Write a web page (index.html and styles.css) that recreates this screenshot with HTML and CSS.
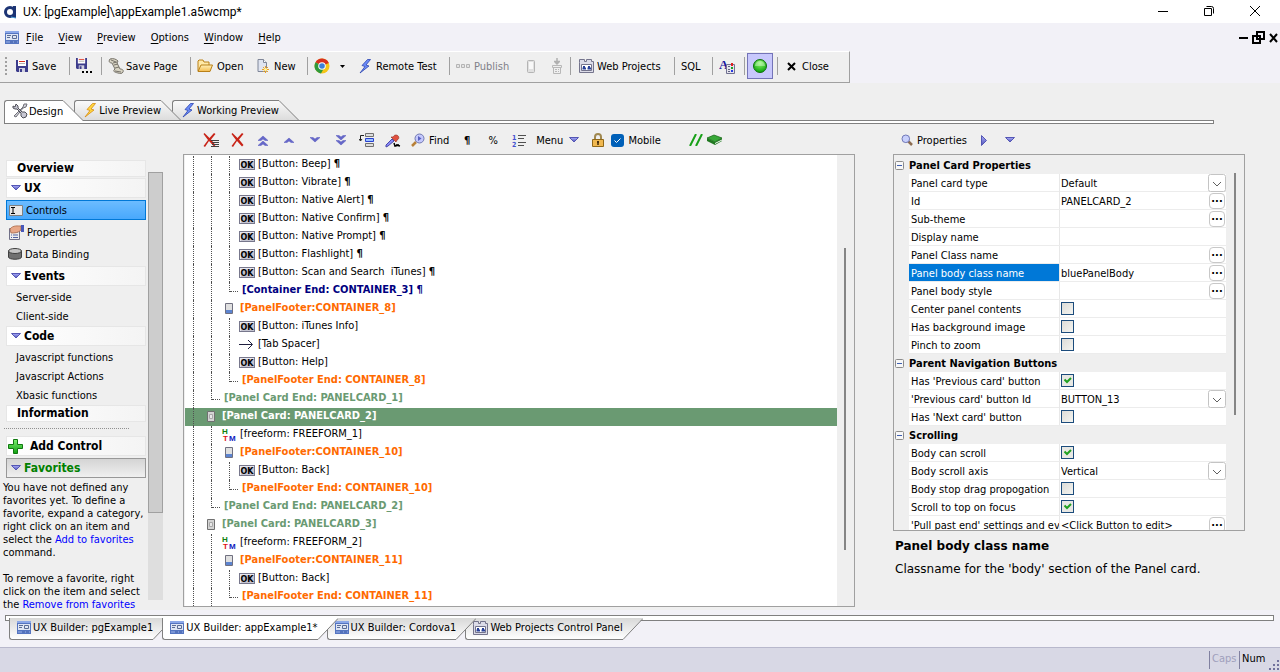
FILE: index.html
```html
<!DOCTYPE html>
<html lang="en">
<head>
    <meta charset="utf-8">
    <title>UX: [pgExample]\appExample1.a5wcmp*</title>
    <link rel="stylesheet" href="styles.css">
</head>
<body>
    <!-- shared icons -->
    <svg class="defs" width="0" height="0">
        <defs>
            <linearGradient id="g-top" x1="0" y1="0" x2="0" y2="1"><stop offset="0" stop-color="#fafafa"/><stop offset="1" stop-color="#dcdcdc"/></linearGradient>
            <linearGradient id="g-bottom" x1="0" y1="0" x2="0" y2="1"><stop offset="0" stop-color="#d8d8d8"/><stop offset="1" stop-color="#ffffff"/></linearGradient>
            <linearGradient id="g-tri" x1="0" y1="0" x2="0" y2="1"><stop offset="0" stop-color="#a8acf8"/><stop offset="1" stop-color="#5254b8"/></linearGradient>
            <radialGradient id="g-ball" cx=".5" cy=".3" r=".7"><stop offset="0" stop-color="#8cf86c"/><stop offset="1" stop-color="#08a008"/></radialGradient>
            <linearGradient id="g-plus" x1="0" y1="0" x2="0" y2="1"><stop offset="0" stop-color="#7cf070"/><stop offset="1" stop-color="#10a010"/></linearGradient>
            <linearGradient id="g-fold" x1="0" y1="0" x2="0" y2="1"><stop offset="0" stop-color="#fff0b8"/><stop offset="1" stop-color="#f4bc50"/></linearGradient>
        </defs>
        <symbol id="form" viewBox="0 0 14 13">
            <rect width="14" height="13" fill="#5474c0"/><rect y="0" width="14" height="2" fill="#8ca8e8"/>
            <path d="M1 3h12v6H1z" fill="#dfe6f4"/><path d="M2 4.500h4M2 6.500h3M7.500 4.500h4v3h-4z" fill="none" stroke="#5b6c94"/><path d="M1 11h12" stroke="#9db4ea"/><path d="M5 11h3M9 11h3" stroke="#3150a0"/>
        </symbol>
        <symbol id="disk" viewBox="0 0 12 12">
            <path d="M0 0h12v12H1L0 11z" fill="#3c3c8c"/><path d="M2 0h8v6H2z" fill="#fff"/><path d="M3 1.500h6" stroke="#d83020"/><path d="M3 3.500h6" stroke="#b0b0b0"/><path d="M3 8h6v4H3z" fill="#d0d0e0"/><path d="M4 9h2v3H4z" fill="#3c3c8c"/>
        </symbol>
        <symbol id="scroll" viewBox="0 0 16 16">
            <path d="M2 1c3-1 6 0 8 2l-1 2 3 6c2 0 4 1 3 3s-3 1.500-5 1-5-1-4-3l1-1-3-6C2 5 0 4 2 1z" fill="#d8d4c4" stroke="#77736a"/><path d="M3 2l5 2M5 5l4-1M6 7l4-1M7 10l4-1M7 13l6 1" stroke="#77736a" fill="none"/>
        </symbol>
        <symbol id="folder" viewBox="0 0 16 14">
            <path d="M1 12V2l1-1h4l1 2h5v3" fill="#ffe9a8" stroke="#b98018"/><path d="M1 12.500L4 6h11.500l-2.500 6.500z" fill="url(#g-fold)" stroke="#b98018"/>
        </symbol>
        <symbol id="new" viewBox="0 0 12 14">
            <path d="M1 .5h5.500l3 3v9H1z" fill="#dfe4f0" stroke="#7f8698"/><path d="M6.500 .5v3h3" fill="#fff" stroke="#7f8698"/><path d="M8.500 7v7M5 10.500h7M6 8l5 5M11 8l-5 5" stroke="#f0a020"/><circle cx="8.500" cy="10.500" r="1.500" fill="#fff8a0"/>
        </symbol>
        <symbol id="chrome" viewBox="0 0 16 16">
            <circle cx="8" cy="8" r="7.500" fill="#f5c518"/><path d="M8 8L1.500 4.200A7.500 7.500 0 0 1 14.800 5z" fill="#d8301f"/><path d="M8 8L1.500 4.200A7.500 7.500 0 0 0 7 15.400L9.500 11z" fill="#2f9a3c"/><circle cx="8" cy="8" r="3.800" fill="#fff"/><circle cx="8" cy="8" r="2.800" fill="#3d7fd8"/>
        </symbol>
        <symbol id="bolt" viewBox="0 0 12 15">
            <path d="M8.500 .5L3 6.500l3 1-5 6.500 9-7-3-1 4.500-5.500z" fill="#6c8cf8" stroke="#2c44b0" stroke-width=".8"/>
        </symbol>
        <symbol id="bolt-y" viewBox="0 0 12 15">
            <path d="M8.500 .5L3 6.500l3 1-5 6.500 9-7-3-1 4.500-5.500z" fill="#ffd840" stroke="#d88a10" stroke-width=".8"/>
        </symbol>
        <symbol id="boxes" viewBox="0 0 14 5"><path d="M.5.500h3v3h-3zM5.500.500h3v3h-3zM10.500.500h3v3h-3z" fill="#e4e4e4" stroke="#b4b4b4"/></symbol>
        <symbol id="phone" viewBox="0 0 8 13"><rect x=".5" y=".5" width="7" height="12" rx="1" fill="#e0e0e0" stroke="#b4b4b4"/><path d="M2 2h4v7H2z" fill="#f8f8f8"/></symbol>
        <symbol id="install" viewBox="0 0 10 16"><path d="M5 0v5M2 3.500h6M3 4l2 2 2-2" fill="none" stroke="#b0b0b0" stroke-width="1.500"/><path d="M.5 7.500h9v2h-9zM1.500 9.500v6h7v-6M3 11.500h2M6 11.500h1M3 13.500h2M6 13.500h1" fill="none" stroke="#b8b8b8"/></symbol>
        <symbol id="projects" viewBox="0 0 15 14">
            <path d="M.5 3.500v-3h5v2h2v-2h5v2h2v11H.5z" fill="#dcdce8" stroke="#74748c"/><path d="M2.500 5.500h10v6h-10z" fill="#fff" stroke="#74748c"/><path d="M4 7h2v1l1 1v1.500H3.500V9L4 8zM9 7h2v1l1 1v1.500H8.500V9L9 8z" fill="#284098"/>
        </symbol>
        <symbol id="x-red" viewBox="0 0 13 14"><path d="M1.500 0l5 5L11 0l1.500 1-4.500 5.500L12.500 12l-1.500 1.500-5-5.500L2 14l-1.500-1 4.500-6L.5 1z" fill="#c82418"/></symbol>
        <symbol id="up" viewBox="0 0 10 6"><path d="M0 5.500L5 1l5 4.500H7L5 4 3 5.500z" fill="#6668c8" stroke="#5658c0" stroke-width=".5"/></symbol>
        <symbol id="down" viewBox="0 0 10 6"><path d="M0 .5L5 5l5-4.500H7L5 2 3 .5z" fill="#6668c8" stroke="#5658c0" stroke-width=".5"/></symbol>
        <symbol id="tri" viewBox="0 0 10 6"><path d="M.5.500h9L5 5z" fill="url(#g-tri)" stroke="#5456b4"/></symbol>
        <symbol id="tri-r" viewBox="0 0 6 11"><path d="M.5.500v10l5-5z" fill="url(#g-tri)" stroke="#5456b4"/></symbol>
        <symbol id="loupe" viewBox="0 0 12 12"><path d="M7 7l4 4" stroke="#8c6c50" stroke-width="2.500"/><circle cx="4.800" cy="4.800" r="3.800" fill="#c8d0fc" stroke="#7078b8"/></symbol>
        <symbol id="card" viewBox="0 0 8 11"><path d="M.5.500h7v10h-7z" fill="#d4d4d4" stroke="#707070"/><path d="M2.500 3.500h3v4h-3z" fill="#e8e8e8" stroke="#a8a8a8"/></symbol>
        <symbol id="footer" viewBox="0 0 8 11"><path d="M.5.500h7v10h-7z" fill="#e0e0e0" stroke="#707080"/><path d="M1 7h6v3H1z" fill="#5c84d0"/></symbol>
        <symbol id="arrow" viewBox="0 0 15 11"><path d="M0 5.500h13M9 1l4.500 4.500L9 10" fill="none" stroke="#202040"/></symbol>
        <symbol id="minus" viewBox="0 0 9 9"><rect x=".5" y=".5" width="8" height="8" rx="1" fill="#f8f8f8" stroke="#8c8c8c"/><path d="M2 4.500h5" stroke="#4060b0"/></symbol>
    </svg>
    <!-- icons with lettering -->
    <svg class="lettered">
        <symbol id="style" viewBox="0 0 16 16">
            <text x="0" y="11" font-size="13" font-weight="bold" font-family="Liberation Serif, serif" fill="#1818a0">A</text><path d="M7.500 6.500h8v9h-8z" fill="#e4e4ec" stroke="#707090"/><path d="M12 5h2v3h-2z" fill="#e02020"/><path d="M12 9h2v2h-2z" fill="#18a028"/><path d="M12 12h2v2h-2z" fill="#2838e0"/><path d="M9 8h2v1H9zM9 11h2v1H9zM9 13h2v1H9z" fill="#606080"/>
        </symbol>
        <symbol id="ok" viewBox="0 0 16 11">
            <rect x=".5" y=".5" width="15" height="10" fill="#c4c4d0" stroke="#77778c"/><path d="M1 1.500h14M1.500 1v9" stroke="#e8e8f0"/>
            <text x="8" y="8.500" text-anchor="middle" font-size="8" font-weight="bold" font-family="DejaVu Sans, sans-serif">OK</text>
        </symbol>
        <symbol id="htm" viewBox="0 0 14 13">
            <g font-size="8" font-weight="bold" font-family="Liberation Sans, sans-serif"><text x="0" y="6" fill="#108010">H</text><text x="1" y="13" fill="#e01010">T</text><text x="7" y="13" fill="#1020c0">M</text></g>
        </symbol>
    </svg>

    <header class="titlebar">
        <svg width="14" height="14" viewBox="0 0 14 14"><circle cx="6" cy="7" r="4.500" fill="none" stroke="#1c3474" stroke-width="3"/><path d="M9 1h3v12H9z" fill="#1c3474"/><path d="M7 12l5 1" stroke="#4ba0d8"/></svg>
        <h1>UX: [pgExample]\appExample1.a5wcmp*</h1>
        <div class="window-buttons">
            <button aria-label="Minimize"><svg width="12" height="12" viewBox="0 0 12 12"><path d="M1 6.500h10" stroke="#000"/></svg></button>
            <button aria-label="Restore"><svg width="12" height="12" viewBox="0 0 12 12"><path d="M1.500 3.500h7v7h-7zM3.500 1.500h5a2 2 0 0 1 2 2V8.500" fill="none" stroke="#000"/></svg></button>
            <button aria-label="Close"><svg width="12" height="12" viewBox="0 0 12 12"><path d="M1 1l10 10M11 1L1 11" stroke="#000"/></svg></button>
        </div>
    </header>

    <nav class="menubar">
        <svg width="14" height="13"><use href="#form"/></svg>
        <button><u>F</u>ile</button>
        <button><u>V</u>iew</button>
        <button><u>P</u>review</button>
        <button><u>O</u>ptions</button>
        <button><u>W</u>indow</button>
        <button><u>H</u>elp</button>
        <div class="mdi-buttons">
            <button aria-label="Minimize document"><svg width="9" height="12" viewBox="0 0 9 12"><path d="M0 6h9" stroke="#000" stroke-width="2"/></svg></button>
            <button aria-label="Restore document"><svg width="13" height="13" viewBox="0 0 13 13"><path d="M5 1h7v7H5zM1 5h7v7H1z" fill="none" stroke="#000" stroke-width="2"/></svg></button>
            <button aria-label="Close document"><svg width="9" height="10" viewBox="0 0 9 10"><path d="M1 1l7 8M8 1L1 9" stroke="#000" stroke-width="2"/></svg></button>
        </div>
    </nav>

    <div class="toolbar-row">
        <div class="toolbar">
            <span class="grip"></span>
            <button class="w60"><svg width="12" height="12"><use href="#disk"/></svg>Save</button>
            <button class="w32" aria-label="Save as"><svg width="18" height="16"><use href="#disk" width="11" height="11"/><path d="M6 13h2v2H6zM10 13h2v2h-2zM14 13h2v2h-2z"/></svg></button>
            <button class="w89"><svg width="16" height="16"><use href="#scroll"/></svg>Save Page</button>
            <button class="w60 plain"><svg width="16" height="14"><use href="#folder"/></svg>Open</button>
            <button class="w57"><svg width="12" height="14"><use href="#new"/></svg>New</button>
            <button class="w45 plain" aria-label="Browser"><svg width="16" height="16"><use href="#chrome"/></svg><svg class="caret" width="5" height="3"><path d="M0 0h5L2.500 3z"/></svg></button>
            <button class="w97"><svg width="12" height="15"><use href="#bolt"/></svg>Remote Test</button>
            <button class="w68" disabled><svg width="14" height="5"><use href="#boxes"/></svg>Publish</button>
            <button class="w26" disabled aria-label="Device"><svg width="8" height="13"><use href="#phone"/></svg></button>
            <button class="w26" disabled aria-label="Install"><svg width="10" height="16"><use href="#install"/></svg></button>
            <button class="w105"><svg width="15" height="14"><use href="#projects"/></svg>Web Projects</button>
            <button class="w38">SQL</button>
            <button class="w32" aria-label="Styles"><svg width="16" height="16"><use href="#style"/></svg></button>
            <button class="pressed" aria-label="Status"><svg width="14" height="14"><circle cx="7" cy="7" r="6.500" fill="url(#g-ball)" stroke="#107010"/><path d="M2 7a5 5 0 0 1 10 0z" fill="#fff" opacity=".35"/></svg></button>
            <button class="close"><svg width="9" height="9"><path d="M1 1l7 7M8 1L1 8" stroke="#000" stroke-width="2"/></svg>Close</button>
        </div>
    </div>

    <main>
        <div class="tabs top">
            <button class="tab active"><span><svg width="16" height="16" viewBox="0 0 16 16"><path d="M2 13l9-9 1-3 3 0-1 3-3 1-7 9z" fill="#d0d0d8" stroke="#707078"/><path d="M1 3l2 1 1-3 2 2v2l4 4h3l2 2-1 3-3 1-2-2V10L5 6H3L1 5z" fill="#c8c8d4" stroke="#505058"/></svg>Design</span><svg class="slant" width="20" height="21"><path d="M0 0L20 21H0z" fill="#fff"/><path d="M0 .5L20 20.500" stroke="#808080"/></svg></button>
            <button class="tab"><span><svg width="16" height="15"><use href="#bolt-y"/></svg>Live Preview</span><svg class="slant" width="20" height="21"><path d="M0 0L20 20H0z" fill="url(#g-top)"/><path d="M0 .5L20 20.500" stroke="#808080"/></svg></button>
            <button class="tab"><span><svg width="16" height="15"><use href="#bolt"/></svg>Working Preview</span><svg class="slant" width="20" height="21"><path d="M0 0L20 20H0z" fill="url(#g-top)"/><path d="M0 .5L20 20.500" stroke="#808080"/></svg></button>
        </div>

        <div class="workspace">
            <aside>
                <nav class="side">
                    <a href="#" class="head short">Overview</a>
                    <a href="#" class="head"><svg width="10" height="6"><use href="#tri"/></svg>UX</a>
                    <a href="#" class="sub selected"><svg width="14" height="11"><path d="M.5.500h13v10H.5z" fill="#e8e8e8" stroke="#808080"/><path d="M2 2.500h4M4 2.500v6M2 8.500h4" stroke="#000" fill="none"/></svg>Controls</a>
                    <a href="#" class="sub"><svg width="16" height="15"><path d="M1.500 3.500h10v11h-10z" fill="#eee" stroke="#707088"/><path d="M3 7h1M5 7h5M3 10h1M5 10h5M3 12.500h1M5 12.500h5" stroke="#5060a0"/><path d="M2 4c3-4 8-3 11-3v4c-3 3-6 3-10 3z" fill="#e8a888" stroke="#a86848" stroke-width=".8"/><path d="M13 0h3v7h-3z" fill="#4858b8"/></svg>Properties</a>
                    <a href="#" class="sub"><svg width="14" height="12"><path d="M.5 3v6c0 3 13 3 13 0V3z" fill="#707070" stroke="#404040"/><ellipse cx="7" cy="3" rx="6.500" ry="2.500" fill="#c4c4c4" stroke="#404040"/></svg>Data Binding</a>
                    <a href="#" class="head"><svg width="10" height="6"><use href="#tri"/></svg>Events</a>
                    <ul>
                        <li><a href="#">Server-side</a></li>
                        <li><a href="#">Client-side</a></li>
                    </ul>
                    <a href="#" class="head"><svg width="10" height="6"><use href="#tri"/></svg>Code</a>
                    <ul>
                        <li><a href="#">Javascript functions</a></li>
                        <li><a href="#">Javascript Actions</a></li>
                        <li><a href="#">Xbasic functions</a></li>
                    </ul>
                    <a href="#" class="head short">Information</a>
                    <hr>
                    <a href="#" class="head add"><svg width="15" height="15"><path d="M5.500.500h4v5h5v4h-5v5h-4v-5h-5v-4h5z" fill="url(#g-plus)" stroke="#107810"/></svg>Add Control</a>
                    <a href="#" class="head favorites"><svg width="10" height="6"><use href="#tri"/></svg>Favorites</a>
                    <div class="help">
                        <p>You have not defined any favorites yet. To define a favorite, expand a category, right click on an item and select the <a href="#">Add to favorites</a> command.</p>
                        <p>To remove a favorite, right click on the item and select the <a href="#">Remove from favorites</a></p>
                    </div>
                </nav>
                <div class="side-scroll"><div class="thumb"></div></div>
            </aside>

            <section class="tree-pane">
                <div class="pane-tools">
                    <button aria-label="Delete with children"><svg width="16" height="14"><use href="#x-red" width="13" height="14"/><path d="M8 7.500h8M9 9.500h7M9 11.500h7M8 13.500h8" stroke="#404040"/></svg></button>
                    <button aria-label="Delete"><svg width="13" height="14"><use href="#x-red"/></svg></button>
                    <button aria-label="Move to top"><svg width="10" height="11"><use href="#up" width="10" height="6"/><use href="#up" y="5" width="10" height="6"/></svg></button>
                    <button aria-label="Move up"><svg width="10" height="6"><use href="#up"/></svg></button>
                    <button aria-label="Move down"><svg width="10" height="6"><use href="#down"/></svg></button>
                    <button aria-label="Move to bottom"><svg width="10" height="11"><use href="#down" width="10" height="6"/><use href="#down" y="5" width="10" height="6"/></svg></button>
                    <button aria-label="Wrap"><svg width="16" height="14"><path d="M5 2.500H1.500v5M0 6l1.500 2L3 6" fill="none" stroke="#202020"/><path d="M6.500.500h8v3h-8zM6.500 10.500h8v3h-8z" fill="#ddd" stroke="#707070"/><path d="M6.500 5.500h8v3h-8z" fill="#9cc4ff" stroke="#2840d0"/></svg></button>
                    <button aria-label="Pick style"><svg width="16" height="15"><path d="M1 12l6-6 2 2-6 5-2 1z" fill="#8888f8" stroke="#4848a8"/><path d="M6 4l5 5 1-2c3-1 2-5-1-5-2 0-2 1-3 2z" fill="#e05040" stroke="#902818" stroke-width=".6"/><path d="M9 10l1 3 4-1M11 12l4 1" fill="none" stroke="#000" stroke-width="1.500"/></svg></button>
                    <button class="text find"><svg width="14" height="14"><path d="M1 13l4-4" stroke="#b88038" stroke-width="2.500"/><circle cx="8.500" cy="5.500" r="4.500" fill="#c4c8fc" stroke="#7078b0"/><path d="M7 3v5l3.500-2.500z" fill="#5860c0"/></svg>Find</button>
                    <button aria-label="Line break"><b>¶</b></button>
                    <button aria-label="Width">%</button>
                    <button aria-label="Tab order"><svg width="14" height="13"><g font-size="7" font-weight="bold" font-family="DejaVu Sans Condensed, sans-serif" fill="#4450d0"><text x="0" y="6">1</text><text x="0" y="13">2</text></g><path d="M6 1.500h8M6 4.500h6M6 8.500h8M6 11.500h6" stroke="#505050"/></svg></button>
                    <button class="text menu">Menu<svg width="10" height="6"><use href="#tri"/></svg></button>
                    <button aria-label="Lock"><svg width="12" height="14"><path d="M3 7V4a3 3 0 0 1 6 0v3" fill="none" stroke="#a08850" stroke-width="2"/><path d="M.5 6.500h11v7H.5z" fill="#f0b850" stroke="#906818"/><path d="M6 8v4M5 9h2" stroke="#402808" stroke-width="1.500"/></svg></button>
                    <label class="mobile"><input type="checkbox" checked>Mobile</label>
                    <button class="comment" aria-label="Comments"><svg width="34" height="12"><path d="M1 12L7 0M7 12l6-12" stroke="#18a018" stroke-width="2"/><path d="M18 4l7-3 8 3-7 4z" fill="#38a838" stroke="#106010" stroke-width=".7"/><path d="M18 4v3l8 4V8zM26 8l7-4v3l-7 4z" fill="#207820"/><path d="M26 9.500l7-3.500" stroke="#fff"/></svg></button>
                </div>
                <div class="tree-box">
                    <ul class="tree">
                        <li><i></i><i></i><i class="last"></i><svg><use href="#ok" width="16" height="11"/></svg>[Button: Beep] <b>¶</b></li>
                        <li><i></i><i></i><i class="last"></i><svg><use href="#ok" width="16" height="11"/></svg>[Button: Vibrate] <b>¶</b></li>
                        <li><i></i><i></i><i class="last"></i><svg><use href="#ok" width="16" height="11"/></svg>[Button: Native Alert] <b>¶</b></li>
                        <li><i></i><i></i><i class="last"></i><svg><use href="#ok" width="16" height="11"/></svg>[Button: Native Confirm] <b>¶</b></li>
                        <li><i></i><i></i><i class="last"></i><svg><use href="#ok" width="16" height="11"/></svg>[Button: Native Prompt] <b>¶</b></li>
                        <li><i></i><i></i><i class="last"></i><svg><use href="#ok" width="16" height="11"/></svg>[Button: Flashlight] <b>¶</b></li>
                        <li><i></i><i></i><i class="last"></i><svg><use href="#ok" width="16" height="11"/></svg>[Button: Scan and Search&nbsp; iTunes] <b>¶</b></li>
                        <li class="container"><i></i><i></i><i class="end"></i>[Container End: CONTAINER_3] ¶</li>
                        <li class="foot"><i></i><i class="last"></i><svg><use href="#footer" x="4" width="8" height="11"/></svg>[PanelFooter:CONTAINER_8]</li>
                        <li><i></i><i></i><i class="last"></i><svg><use href="#ok" width="16" height="11"/></svg>[Button: iTunes Info]</li>
                        <li><i></i><i></i><i class="last"></i><svg><use href="#arrow" width="15" height="11"/></svg>[Tab Spacer]</li>
                        <li><i></i><i></i><i class="last"></i><svg><use href="#ok" width="16" height="11"/></svg>[Button: Help]</li>
                        <li class="foot"><i></i><i></i><i class="end"></i>[PanelFooter End: CONTAINER_8]</li>
                        <li class="panel"><i></i><i class="end"></i>[Panel Card End: PANELCARD_1]</li>
                        <li class="panel selected"><i class="last"></i><svg><use href="#card" x="4" width="8" height="11"/></svg>[Panel Card: PANELCARD_2]</li>
                        <li><i></i><i class="last"></i><svg class="html"><use href="#htm" x="1" width="14" height="13"/></svg>[freeform: FREEFORM_1]</li>
                        <li class="foot"><i></i><i class="last"></i><svg><use href="#footer" x="4" width="8" height="11"/></svg>[PanelFooter:CONTAINER_10]</li>
                        <li><i></i><i></i><i class="last"></i><svg><use href="#ok" width="16" height="11"/></svg>[Button: Back]</li>
                        <li class="foot"><i></i><i></i><i class="end"></i>[PanelFooter End: CONTAINER_10]</li>
                        <li class="panel"><i></i><i class="end"></i>[Panel Card End: PANELCARD_2]</li>
                        <li class="panel"><i class="last"></i><svg><use href="#card" x="4" width="8" height="11"/></svg>[Panel Card: PANELCARD_3]</li>
                        <li><i></i><i class="last"></i><svg class="html"><use href="#htm" x="1" width="14" height="13"/></svg>[freeform: FREEFORM_2]</li>
                        <li class="foot"><i></i><i class="last"></i><svg><use href="#footer" x="4" width="8" height="11"/></svg>[PanelFooter:CONTAINER_11]</li>
                        <li><i></i><i></i><i class="last"></i><svg><use href="#ok" width="16" height="11"/></svg>[Button: Back]</li>
                        <li class="foot"><i></i><i></i><i class="end"></i>[PanelFooter End: CONTAINER_11]</li>
                    </ul>
                    <div class="thin-scroll tree-scroll"><div></div></div>
                </div>
            </section>

            <section class="prop-pane">
                <div class="pane-tools">
                    <button class="text props"><svg width="12" height="12"><use href="#loupe"/></svg>Properties</button>
                    <button aria-label="Next"><svg width="6" height="11"><use href="#tri-r"/></svg></button>
                    <button aria-label="More"><svg width="10" height="6"><use href="#tri"/></svg></button>
                </div>
                <div class="prop-box">
                    <div class="props-list">
                        <h2><svg width="9" height="9"><use href="#minus"/></svg>Panel Card Properties</h2>
                        <div class="prop"><label for="p1">Panel card type</label><select id="p1"><option>Default</option></select></div>
                        <div class="prop"><label for="p2">Id</label><input type="text" id="p2" value="PANELCARD_2"><button aria-label="Edit Id">...</button></div>
                        <div class="prop"><label for="p3">Sub-theme</label><input type="text" id="p3"><button aria-label="Edit Sub-theme">...</button></div>
                        <div class="prop"><label for="p4">Display name</label><input type="text" id="p4"></div>
                        <div class="prop"><label for="p5">Panel Class name</label><input type="text" id="p5"><button aria-label="Edit Panel Class name">...</button></div>
                        <div class="prop selected"><label for="p6">Panel body class name</label><input type="text" id="p6" value="bluePanelBody"><button aria-label="Edit Panel body class name">...</button></div>
                        <div class="prop"><label for="p7">Panel body style</label><input type="text" id="p7"><button aria-label="Edit Panel body style">...</button></div>
                        <div class="prop"><label for="p8">Center panel contents</label><input type="checkbox" id="p8"></div>
                        <div class="prop"><label for="p9">Has background image</label><input type="checkbox" id="p9"></div>
                        <div class="prop"><label for="p10">Pinch to zoom</label><input type="checkbox" id="p10"></div>
                        <h2><svg width="9" height="9"><use href="#minus"/></svg>Parent Navigation Buttons</h2>
                        <div class="prop"><label for="p11">Has 'Previous card' button</label><input type="checkbox" id="p11" checked></div>
                        <div class="prop"><label for="p12">'Previous card' button Id</label><select id="p12"><option>BUTTON_13</option></select></div>
                        <div class="prop"><label for="p13">Has 'Next card' button</label><input type="checkbox" id="p13"></div>
                        <h2><svg width="9" height="9"><use href="#minus"/></svg>Scrolling</h2>
                        <div class="prop"><label for="p14">Body can scroll</label><input type="checkbox" id="p14" checked></div>
                        <div class="prop"><label for="p15">Body scroll axis</label><select id="p15"><option>Vertical</option></select></div>
                        <div class="prop"><label for="p16">Body stop drag propogation</label><input type="checkbox" id="p16"></div>
                        <div class="prop"><label for="p17">Scroll to top on focus</label><input type="checkbox" id="p17" checked></div>
                        <div class="prop"><label for="p18">'Pull past end' settings and eve</label><input type="text" id="p18" value="&lt;Click Button to edit&gt;"><button aria-label="Edit Pull past end">...</button></div>
                    </div>
                    <div class="thin-scroll prop-scroll"><div></div></div>
                </div>
                <div class="description">
                    <h3>Panel body class name</h3>
                    <p>Classname for the 'body' section of the Panel card.</p>
                </div>
            </section>
        </div>
    </main>

    <div class="tabs bottom">
        <button class="tab"><span><svg width="14" height="13"><use href="#form"/></svg>UX Builder: pgExample1</span><svg class="slant" width="20" height="22"><path d="M0 22L20 0H0z" fill="url(#g-bottom)"/><path d="M0 21.500L20 .5" stroke="#808080"/></svg></button>
        <button class="tab active"><span><svg width="14" height="13"><use href="#form"/></svg>UX Builder: appExample1*</span><svg class="slant" width="20" height="22"><path d="M0 22L20 0H0z" fill="#fff"/><path d="M0 21.500L20 .5" stroke="#808080"/></svg></button>
        <button class="tab"><span><svg width="14" height="13"><use href="#form"/></svg>UX Builder: Cordova1</span><svg class="slant" width="20" height="22"><path d="M0 22L20 0H0z" fill="url(#g-bottom)"/><path d="M0 21.500L20 .5" stroke="#808080"/></svg></button>
        <button class="tab"><span><svg width="15" height="14"><use href="#projects"/></svg>Web Projects Control Panel</span><svg class="slant" width="20" height="22"><path d="M0 22L20 0H0z" fill="url(#g-bottom)"/><path d="M0 21.500L20 .5" stroke="#808080"/></svg></button>
    </div>

    <footer class="statusbar">
        <span class="off">Caps</span>
        <span>Num</span>
        <svg width="11" height="11"><path d="M8 0h2v2H8zM4 4h2v2H4zM8 4h2v2H8zM0 8h2v2H0zM4 8h2v2H4zM8 8h2v2H8z" fill="#70709c"/></svg>
    </footer>
</body>
</html>
```
FILE: styles.css
```css
* { box-sizing: border-box; }
body { margin: 0; height: 100vh; display: flex; flex-direction: column; overflow: hidden; background: #efefef; color: #000; font: 11px/13px "DejaVu Sans Condensed", "Noto Sans", sans-serif; }
button, input, select { font: inherit; color: inherit; margin: 0; padding: 0; border: none; background: none; }
button { display: flex; align-items: center; white-space: nowrap; }
a { color: inherit; text-decoration: none; }
ul { list-style: none; margin: 0; padding: 0; }
h1, h2, h3, p { margin: 0; }
svg { display: block; flex: none; }
.defs { position: absolute; }
.lettered { display: none; }

/* title and menu */
.titlebar { height: 23px; flex: none; display: flex; align-items: center; padding-left: 4px; background: #fff; }
.titlebar h1 { font: 12px/16px Roboto, "Noto Sans", sans-serif; margin-left: 5px; }
.window-buttons { display: flex; margin-left: auto; padding: 0 2px 2px 0; height: 23px; }
.window-buttons button { width: 46px; justify-content: center; }
.menubar { height: 28px; flex: none; display: flex; align-items: center; gap: 15px; padding: 1px 2px 0 5px; background: #f2f1f7; }
.menubar > svg { margin-right: -8px; }
.menubar u { text-underline-offset: 2px; }
.mdi-buttons { display: flex; gap: 4px; margin-left: auto; }

/* main toolbar */
.toolbar-row { flex: none; background: #f2f1f7; display: flex; }
.toolbar { display: flex; align-items: center; width: 850px; height: 32px; padding: 0 0 2px 5px; background: #efefef; border-top: 1px solid #fff; border-bottom: 1px solid #a0a0a0; border-right: 1px solid #a0a0a0; }
.grip { width: 5px; height: 18px; border-left: 2px dotted #a0a0a0; }
.toolbar button { height: 18px; gap: 5px; padding: 0 6px; border-right: 1px solid #a0a0a0; }
.toolbar button:disabled { color: #808088; border-right-color: transparent; }
.toolbar .plain { border-right-color: transparent; }
.toolbar .w26 { width: 26px; justify-content: center; }
.toolbar .w32 { width: 32px; }
.toolbar .w38 { width: 38px; }
.toolbar .w45 { width: 45px; gap: 10px; }
.toolbar .w57 { width: 57px; }
.toolbar .w60 { width: 60px; gap: 4px; }
.toolbar .w68 { width: 68px; gap: 4px; }
.toolbar .w89 { width: 89px; gap: 2px; }
.toolbar .w97 { width: 97px; }
.toolbar .w105 { width: 105px; gap: 3px; padding-left: 8px; border-left: 1px solid #a0a0a0; }
.toolbar .pressed { width: 26px; height: 26px; margin: 0 4px 0 2px; justify-content: center; background: #c8c8fc; border: 1px solid #7474b8; }
.toolbar .close { padding-left: 9px; gap: 6px; border-right: none; border-left: 1px solid #a0a0a0; }

/* slanted tabs */
.tabs { display: flex; flex: none; position: relative; }
.tab { position: relative; margin-right: -9px; z-index: 2; }
.tab:nth-child(3) { z-index: 1; }
.tab:nth-child(4) { z-index: 0; }
.tab.active { z-index: 4; }
.tab span { display: flex; align-items: center; border-left: 1px solid #808080; }
.top { margin: 17px 66px 0 4px; border-bottom: 1px solid #808080; padding-bottom: 2px; }
.top::before { content: ""; position: absolute; left: 0; right: 0; bottom: 0; height: 2px; background: #fff; border-top: 1px solid #808080; border-left: 1px solid #808080; border-right: 1px solid #808080; }
.top .tab { height: 20px; }
.top .tab span { height: 20px; padding-left: 7px; gap: 1px; border-top: 1px solid #808080; border-top-left-radius: 3px; background: linear-gradient(#fafafa, #dcdcdc); }
.top .tab .slant { height: 20px; }
.top .tab.active, .top .tab.active span, .top .tab.active .slant { height: 21px; }
.top .tab.active span { background: #fff; }

main { flex: 1; min-height: 0; display: flex; flex-direction: column; padding-bottom: 3px; }
.workspace { flex: 1; min-height: 0; display: grid; grid-template-columns: 183px minmax(0, 672fr) minmax(0, 390fr); padding: 2px 35px 0 0; }

/* left navigation */
aside { display: flex; min-height: 0; padding-top: 34px; margin-bottom: -3px; overflow: hidden; }
.side { width: 148px; }
.side > a { display: flex; align-items: center; margin: 0 2px 2px 6px; height: 20px; }
.side .head { font-weight: bold; font-size: 12px; gap: 3px; padding-left: 4px; background: linear-gradient(90deg, #fff, #f4f4f4); border: 1px solid #e6e6e6; }
.side .head.short { height: 17px; padding-left: 10px; margin-bottom: 1px; }
.side .head:has(+ ul) { margin-bottom: 1px; }
.side .sub { padding-left: 2px; gap: 3px; }
.side .sub.selected { background: linear-gradient(#6cbcff, #48a8fc); border: 1px solid #0078d7; }
.side ul { padding: 1px 0 0 16px; }
.side li { height: 19px; line-height: 19px; }
.side hr { width: 125px; margin: 6px 0 7px 4px; border: none; border-top: 1px dotted #909090; }
.side .head.add { padding-left: 1px; gap: 7px; }
.side .head.favorites { color: #008000; border-color: #989898; background: linear-gradient(#d4d4d4, #f0f0f0); }
.help { padding: 1px 0 0 3px; }
.help p { margin-bottom: 13px; }
.help a { color: #0000ff; }
.side-scroll { width: 15px; margin-bottom: 10px; padding-top: 12px; background: linear-gradient(#efefef 12px, #dedede 12px); }
.side-scroll .thumb { height: 341px; background: #cdcdcd; border: 1px solid #a0a0a0; }

/* control tree */
.tree-pane, .prop-pane { display: flex; flex-direction: column; min-height: 0; min-width: 0; }
.pane-tools { display: flex; align-items: center; height: 28px; flex: none; padding-left: 15px; }
.pane-tools button { width: 26px; height: 20px; justify-content: center; }
.pane-tools .text { width: auto; gap: 4px; }
.pane-tools .find { padding: 0 5px; }
.pane-tools .menu { padding: 0 6px 0 4px; gap: 6px; }
.mobile { display: flex; align-items: center; gap: 4px; }
.mobile input, .prop input[type=checkbox] { appearance: none; width: 13px; height: 13px; }
.mobile input { border-radius: 3px; background: #0060b8 url("data:image/svg+xml,%3Csvg xmlns='http://www.w3.org/2000/svg' width='13' height='13'%3E%3Cpath d='M3.500 6.500l2 2 4-4' fill='none' stroke='white'/%3E%3C/svg%3E"); }
.pane-tools .comment { width: 34px; margin-left: 28px; }
.tree-box, .prop-box { flex: 1; min-height: 0; display: flex; border: 1px solid #a0a0a0; overflow: hidden; }
.tree { flex: 1; min-width: 0; margin-left: 1px; padding-top: 1px; background: #fff; }
.tree li { display: flex; align-items: center; height: 18px; line-height: 14px; padding: 0 0 2px 8px; white-space: pre; }
.tree i { width: 18px; height: 18px; border-left: 1px dotted #505050; flex: none; align-self: flex-start; }
.tree .last { width: 10px; }
.tree .end { position: relative; width: 13px; height: 10px; }
.tree .end::after { content: ""; position: absolute; left: 0; bottom: 0; width: 8px; border-bottom: 1px dotted #505050; }
.tree svg { width: 19px; height: 11px; }
.tree svg.html { height: 13px; }
.container, .foot, .panel { font-weight: bold; }
.container { color: #000080; }
.foot { color: #ff6a00; }
.panel { color: #6a9a72; }
.tree .selected { background: #6a9a72; color: #fff; }
.thin-scroll { width: 17px; flex: none; background: #efefef; }
.thin-scroll div { width: 2px; background: #858585; }
.tree-scroll div { margin: 93px 0 0 7px; height: 302px; }

/* property grid */
.prop-pane { margin-left: 38px; }
.prop-pane .pane-tools { padding-left: 8px; }
.pane-tools .props { margin-right: 4px; gap: 4px; }
.props-list { flex: 1; min-width: 0; padding-top: 1px; }
.props-list h2 { display: flex; align-items: center; gap: 5px; height: 18px; padding-left: 1px; font-size: 11px; line-height: 13px; }
.prop { display: grid; grid-template-columns: 151px minmax(0, 1fr) auto; height: 18px; margin-left: 15px; background: #fff; border-bottom: 1px solid #ececec; }
.prop label { border-right: 1px solid #e8e8e8; padding-left: 2px; line-height: 19px; white-space: nowrap; overflow: hidden; }
.prop input, .prop select { padding-left: 1px; width: 100%; height: 17px; }
.prop input[type=text] { padding-top: 2px; }
.prop select { appearance: none; grid-column: 2 / 4; height: 18px; background: url("data:image/svg+xml,%3Csvg xmlns='http://www.w3.org/2000/svg' width='18' height='18'%3E%3Crect x='.5' y='.5' width='17' height='17' rx='2' fill='white' stroke='%23c4c4c4'/%3E%3Cpath d='M5 8l4 4 4-4' fill='none' stroke='%23606060'/%3E%3C/svg%3E") right top no-repeat; }
.prop button { width: 16px; height: 16px; margin: 1px 1px 0 0; padding-bottom: 5px; justify-content: center; font-weight: bold; background: #fff; border: 1px solid #c8c8c8; border-radius: 4px; }
.prop.selected label { background: #0078d7; color: #fff; }
.prop input[type=checkbox] { margin: 2px 0 0 1px; border: 1px solid #1c4c7c; background: linear-gradient(135deg, #dcdcd8, #f4f4f0); }
.prop input[type=checkbox]:checked { background: #e8e8e4 url("data:image/svg+xml,%3Csvg xmlns='http://www.w3.org/2000/svg' width='11' height='11'%3E%3Cpath d='M2.500 4.500L5 7l4-4' fill='none' stroke='%2321a121' stroke-width='2'/%3E%3C/svg%3E"); }
.prop-box .thin-scroll { width: 18px; }
.prop-scroll div { margin: 18px 0 0 8px; height: 242px; }
.description { flex: none; height: 76px; padding: 9px 2px 0; font: 12px/13px "DejaVu Sans", sans-serif; }
.description h3 { font-size: 12px; margin-bottom: 10px; }

/* document tabs and status */
.bottom { height: 37px; padding: 8px 0 0 9px; background: #f2f1f7; }
.bottom::before { content: ""; position: absolute; left: 5px; right: 6px; top: 5px; height: 4px; background: #fff; border: 1px solid #808080; }
.bottom .tab { height: 22px; margin-right: -11px; }
.bottom .tab span { height: 22px; gap: 2px; padding: 0 0 2px 7px; border-bottom: 1px solid #808080; border-bottom-left-radius: 3px; background: linear-gradient(#d8d8d8, #fff); }
.bottom .tab.active span { background: #fff; }
.statusbar { height: 25px; flex: none; display: flex; align-items: center; justify-content: flex-end; padding-bottom: 1px; background: #d8d8e5; border-top: 1px solid #b8b8cc; }
.statusbar span { height: 18px; line-height: 16px; width: 30px; padding-left: 2px; border-left: 1px solid #8080a0; }
.statusbar .off { color: #a0a0bc; }
.statusbar svg { align-self: flex-end; }
```
